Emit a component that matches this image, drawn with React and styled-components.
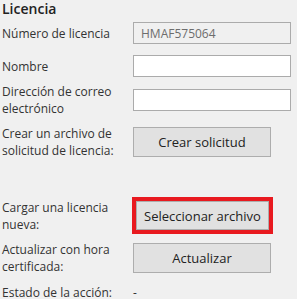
import React from "react";
import styled, { createGlobalStyle } from "styled-components";

const GlobalStyle = createGlobalStyle`
    html, body {
        margin: 0;
        padding: 0;
        background: #f0f0f0;
    }
    body {
        font-family: "Open Sans", "Noto Sans", "Liberation Sans", sans-serif;
        font-size: 12px;
        color: #333;
    }
`;

const Panel = styled.div`
    width: 297px;
    height: 299px;
    overflow: hidden;
    padding: 0 6px 0 2px;
    box-sizing: border-box;
`;

const Title = styled.h2`
    margin: 0;
    font-size: 14px;
    font-weight: 600;
    line-height: 18px;
    color: #222;
    height: 20px;
`;

const Row = styled.div`
    display: flex;
    align-items: center;
    height: ${props => props.h || 22}px;
    margin-top: ${props => props.top || 0}px;
`;

const Label = styled.div`
    width: 131px;
    flex: none;
    line-height: 17px;
    color: #333;
`;

const TextInput = styled.input`
    box-sizing: border-box;
    width: 158px;
    height: 22px;
    border: 1px solid #ababab;
    background: ${props => props.disabled ? "#f0f0f0" : "#fff"};
    color: #6d6d6d;
    font-family: inherit;
    font-size: 12px;
    padding: 0 7px;
    margin: 0;
    outline: none;
`;

const Button = styled.button`
    box-sizing: border-box;
    width: 138px;
    height: 30px;
    border: 1px solid #adadad;
    background: #e1e1e1;
    color: #222;
    font-family: inherit;
    font-size: 13px;
    padding: 0;
    margin: 0;
`;

const Highlight = styled.div`
    border: 4px solid #e8191f;
    display: flex;
    margin-left: -1px;
    & > button {
        width: 133px;
        height: 29px;
    }
`;

export default function App() {
    return (
        <>
            <GlobalStyle />
            <Panel>
                <Title>Licencia</Title>
                <Row top={2}>
                    <Label>Número de licencia</Label>
                    <TextInput disabled value="HMAF575064" readOnly />
                </Row>
                <Row top={11}>
                    <Label>Nombre</Label>
                    <TextInput />
                </Row>
                <Row top={6} h={34}>
                    <Label>Dirección de correo electrónico</Label>
                    <TextInput />
                </Row>
                <Row top={8} h={34}>
                    <Label>Crear un archivo de solicitud de licencia:</Label>
                    <Button>Crear solicitud</Button>
                </Row>
                <Row top={38} h={37}>
                    <Label>Cargar una licencia nueva:</Label>
                    <Highlight>
                        <Button>Seleccionar archivo</Button>
                    </Highlight>
                </Row>
                <Row top={7} h={34}>
                    <Label>Actualizar con hora certificada:</Label>
                    <Button>Actualizar</Button>
                </Row>
                <Row top={9} h={17}>
                    <Label>Estado de la acción:</Label>
                    <span>-</span>
                </Row>
            </Panel>
        </>
    );
}
